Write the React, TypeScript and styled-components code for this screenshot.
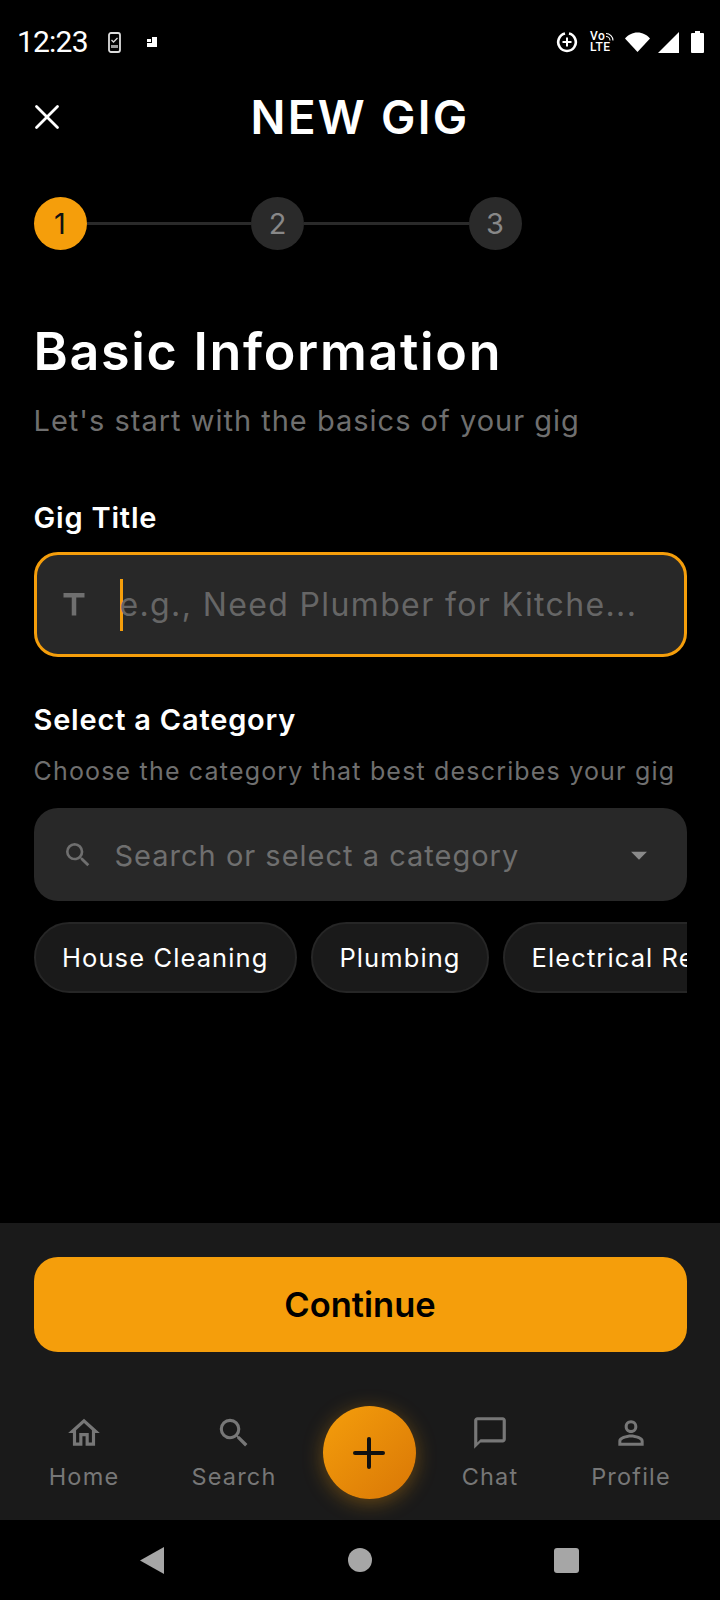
import React from "react"

import { Plus, X } from "lucide-react"
import {
	MdArrowDropDown,
	MdChatBubbleOutline,
	MdOutlineHome,
	MdPersonOutline,
	MdSearch,
	MdTitle,
} from "react-icons/md"
import styled, { createGlobalStyle } from "styled-components"

const STEPS = [1, 2, 3]
const CHIPS = ["House Cleaning", "Plumbing", "Electrical Repair", "Painting"]

const App = () => {
	return (
		<Screen>
			<GlobalStyle />
			<StatusBar>
				<StatusLeft>
					<Clock>12:23</Clock>
					<svg width="13" height="21" viewBox="0 0 13 21">
						<rect x="1" y="1" width="11" height="19" rx="2" fill="none" stroke="#ddd" strokeWidth="1.8" />
						<path d="M3.500 8l2 2 4-4" fill="none" stroke="#ddd" strokeWidth="1.3" />
						<rect x="3" y="13" width="7" height="3" fill="#999" />
					</svg>
					<svg width="10" height="10" viewBox="0 0 10 10">
						<path d="M0 2h4v3H0zM5 0h5v6H5zM0 6h10v4H0z" fill="#fff" />
					</svg>
				</StatusLeft>
				<StatusRight>
					<svg width="22" height="22" viewBox="0 0 22 22">
						<path d="M13 2.600A8.800 8.800 0 1 1 9 2.600" fill="none" stroke="#fff" strokeWidth="2.600" />
						<path d="M11 6.500v9M6.500 11h9" stroke="#fff" strokeWidth="2" />
					</svg>
					<VolteIcon>
						<svg width="10" height="9" viewBox="0 0 10 9">
							<path d="M1 1.500a7 7 0 0 1 7 7M1 4.500a4 4 0 0 1 4 4" fill="none" stroke="#fff" strokeWidth="1.100" />
						</svg>
						<VolteText>Vo</VolteText>
						<VolteText>LTE</VolteText>
					</VolteIcon>
					<svg width="25" height="20" viewBox="0 0 25 20">
						<path d="M0 6.500C3 3 7.500 0.500 12.500 0.500S22 3 25 6.500L12.500 20z" fill="#fff" />
					</svg>
					<SignalIcon width="21" height="21" viewBox="0 0 21 21">
						<path d="M21 0v21H0z" fill="#fff" />
					</SignalIcon>
					<svg width="13" height="22" viewBox="0 0 13 22">
						<path d="M4 0h5v2h3a1 1 0 0 1 1 1v18a1 1 0 0 1-1 1H1a1 1 0 0 1-1-1V3a1 1 0 0 1 1-1h3z" fill="#fff" />
					</svg>
				</StatusRight>
			</StatusBar>

			<Header>
				<CloseButton>
					<X size={42} strokeWidth={1.6} color="#fff" />
				</CloseButton>
				<Title>NEW GIG</Title>
			</Header>

			<Content>
				<Stepper>
					{STEPS.map((step, index) => (
						<React.Fragment key={step}>
							{index > 0 && <StepLine />}
							<StepCircle $active={step === 1}>{step}</StepCircle>
						</React.Fragment>
					))}
				</Stepper>

				<Heading>Basic Information</Heading>
				<SubHeading>Let's start with the basics of your gig</SubHeading>

				<FieldLabel>Gig Title</FieldLabel>
				<TitleInput>
					<MdTitle size={36} color="#6f6f6f" />
					<Caret />
					<Placeholder>e.g., Need Plumber for Kitche...</Placeholder>
				</TitleInput>

				<CategoryLabel>Select a Category</CategoryLabel>
				<Hint>Choose the category that best describes your gig</Hint>

				<SearchSelect>
					<MdSearch size={32} color="#6f6f6f" />
					<SelectText>Search or select a category</SelectText>
					<MdArrowDropDown size={38} color="#8a8a8a" />
				</SearchSelect>

				<ChipRow>
					{CHIPS.map((chip) => (
						<Chip key={chip}>{chip}</Chip>
					))}
				</ChipRow>
			</Content>

			<Footer>
				<ContinueButton>Continue</ContinueButton>
			</Footer>

			<BottomNav>
				<NavItem>
					<MdOutlineHome size={38} />
					<NavLabel>Home</NavLabel>
				</NavItem>
				<NavItem>
					<MdSearch size={38} />
					<NavLabel>Search</NavLabel>
				</NavItem>
				<Fab>
					<Plus size={48} strokeWidth={2} color="#111" />
				</Fab>
				<NavItem>
					<MdChatBubbleOutline size={38} />
					<NavLabel>Chat</NavLabel>
				</NavItem>
				<NavItem>
					<MdPersonOutline size={38} />
					<NavLabel>Profile</NavLabel>
				</NavItem>
			</BottomNav>

			<SystemNav>
				<svg width="24" height="27" viewBox="0 0 24 27">
					<path d="M24 0v27L0 13.500z" fill="#a6a6a6" />
				</svg>
				<HomeDot />
				<RecentsSquare />
			</SystemNav>
		</Screen>
	)
}

export default App

const GlobalStyle = createGlobalStyle`
	html, body {
		margin: 0;
		padding: 0;
		background: #000;
	}
	* {
		box-sizing: border-box;
	}
`

const Screen = styled.div`
	display: flex;
	flex-direction: column;
	width: 720px;
	height: 1600px;
	overflow: hidden;
	background: #000;
	color: #fff;
	font-family: Inter, "Liberation Sans", sans-serif;
`

const StatusBar = styled.div`
	display: flex;
	flex-shrink: 0;
	align-items: center;
	justify-content: space-between;
	height: 84px;
	padding: 0 16px 0 17px;
`

const StatusLeft = styled.div`
	display: flex;
	align-items: center;
	gap: 20px;

	svg:last-child {
		margin-left: 6px;
	}
`

const StatusRight = styled.div`
	display: flex;
	align-items: center;
	gap: 10px;
`

const SignalIcon = styled.svg`
	margin: 0 2px 0 -2px;
`

const Clock = styled.span`
	font-family: Roboto, sans-serif;
	font-size: 30px;
	line-height: 1;
	letter-spacing: -0.8px;
`

const VolteIcon = styled.div`
	position: relative;
	display: flex;
	flex-direction: column;
	width: 25px;
	margin-left: 2px;

	svg {
		position: absolute;
		top: 1px;
		right: 0;
	}
`

const VolteText = styled.span`
	font-family: Roboto, sans-serif;
	font-size: 12px;
	font-weight: 500;
	line-height: 11px;
	letter-spacing: 0.5px;
`

const Header = styled.div`
	position: relative;
	display: flex;
	flex-shrink: 0;
	align-items: center;
	justify-content: center;
	height: 66px;
`

const CloseButton = styled.div`
	position: absolute;
	top: 12px;
	left: 26px;
	display: flex;
`

const Title = styled.h1`
	margin: 0;
	font-size: 46px;
	font-weight: 600;
	letter-spacing: 2.3px;
`

const Content = styled.div`
	display: flex;
	flex: 1;
	flex-direction: column;
	padding: 47px 33.500px 0;
	min-height: 0;
`

const Stepper = styled.div`
	display: flex;
	align-items: center;
`

const StepCircle = styled.div<{ $active: boolean }>`
	display: flex;
	align-items: center;
	justify-content: center;
	width: 53px;
	height: 53px;
	flex-shrink: 0;
	border-radius: 50%;
	background: ${(p) => (p.$active ? "#f59e0b" : "#2a2a2a")};
	color: ${(p) => (p.$active ? "#111" : "#888")};
	font-size: 29px;
	font-weight: 400;
`

const StepLine = styled.div`
	width: 164.500px;
	height: 3px;
	background: #2a2a2a;
`

const Heading = styled.h2`
	margin: 66px 0 0;
	font-size: 52px;
	font-weight: 600;
	line-height: 72px;
	letter-spacing: 1.7px;
`

const SubHeading = styled.p`
	margin: 14px 0 0;
	color: #6f6f6f;
	font-size: 29px;
	line-height: 38px;
	letter-spacing: 1px;
`

const FieldLabel = styled.div`
	margin-top: 59px;
	font-size: 29px;
	font-weight: 600;
	line-height: 38px;
	letter-spacing: 0.8px;
`

const TitleInput = styled.div`
	display: flex;
	flex-shrink: 0;
	align-items: center;
	height: 105px;
	margin-top: 15px;
	padding: 0 0 0 19px;
	border: 3px solid #f59e0b;
	border-radius: 24px;
	background: #282828;
`

const Caret = styled.span`
	width: 3px;
	height: 52px;
	margin: 0 -3px 0 28px;
	flex-shrink: 0;
	background: #f59e0b;
`

const Placeholder = styled.span`
	color: #666;
	font-size: 32px;
	letter-spacing: 1.37px;
	white-space: nowrap;
`

const CategoryLabel = styled(FieldLabel)`
	margin-top: 44px;
`

const Hint = styled.p`
	margin: 14px 0 0;
	color: #6f6f6f;
	font-size: 25px;
	line-height: 36px;
	letter-spacing: 1.18px;
	white-space: nowrap;
`

const SearchSelect = styled.div`
	display: flex;
	flex-shrink: 0;
	align-items: center;
	height: 93px;
	margin-top: 19px;
	padding: 0 29px 0 28px;
	border-radius: 24px;
	background: #282828;
`

const SelectText = styled.span`
	flex: 1;
	margin-left: 21px;
	padding-top: 2px;
	color: #6f6f6f;
	font-size: 29px;
	letter-spacing: 1px;
`

const ChipRow = styled.div`
	display: flex;
	flex-shrink: 0;
	gap: 14px;
	margin-top: 21px;
	overflow: hidden;
`

const Chip = styled.div`
	display: flex;
	align-items: center;
	height: 71px;
	flex-shrink: 0;
	padding: 0 26.500px;
	border: 2px solid #262626;
	border-radius: 36px;
	background: #1a1a1a;
	font-size: 25.500px;
	font-weight: 400;
	letter-spacing: 1.1px;
	white-space: nowrap;
`

const Footer = styled.div`
	flex-shrink: 0;
	height: 152px;
	padding: 34px 33.500px 0;
	background: #1a1a1a;
`

const ContinueButton = styled.button`
	width: 100%;
	height: 95px;
	border: 0;
	border-radius: 24px;
	background: #f59e0b;
	color: #000;
	font-family: inherit;
	font-size: 34.500px;
	font-weight: 600;
`

const BottomNav = styled.div`
	display: grid;
	flex-shrink: 0;
	grid-template-columns: 168px 132px 138px 104px 178px;
	align-items: center;
	height: 145px;
	padding-top: 10px;
	background: #1a1a1a;
`

const NavItem = styled.div`
	display: flex;
	flex-direction: column;
	align-items: center;
	gap: 10px;
	color: #777;
`

const NavLabel = styled.span`
	font-size: 23.500px;
	font-weight: 400;
	letter-spacing: 1.2px;
`

const Fab = styled.div`
	display: flex;
	align-items: center;
	justify-content: center;
	width: 93px;
	height: 93px;
	justify-self: center;
	border-radius: 50%;
	background: linear-gradient(135deg, #f59e0b, #d97706);
	box-shadow: 0 4px 20px rgba(245, 158, 11, 0.35);
`

const SystemNav = styled.div`
	display: grid;
	flex-shrink: 0;
	grid-template-columns: 304px 112px 300px;
	height: 80px;
	justify-items: center;
	align-items: center;
	background: #000;
`

const HomeDot = styled.div`
	width: 24px;
	height: 24px;
	border-radius: 50%;
	background: #a6a6a6;
`

const RecentsSquare = styled.div`
	width: 25px;
	height: 25px;
	border-radius: 3px;
	background: #a6a6a6;
`
